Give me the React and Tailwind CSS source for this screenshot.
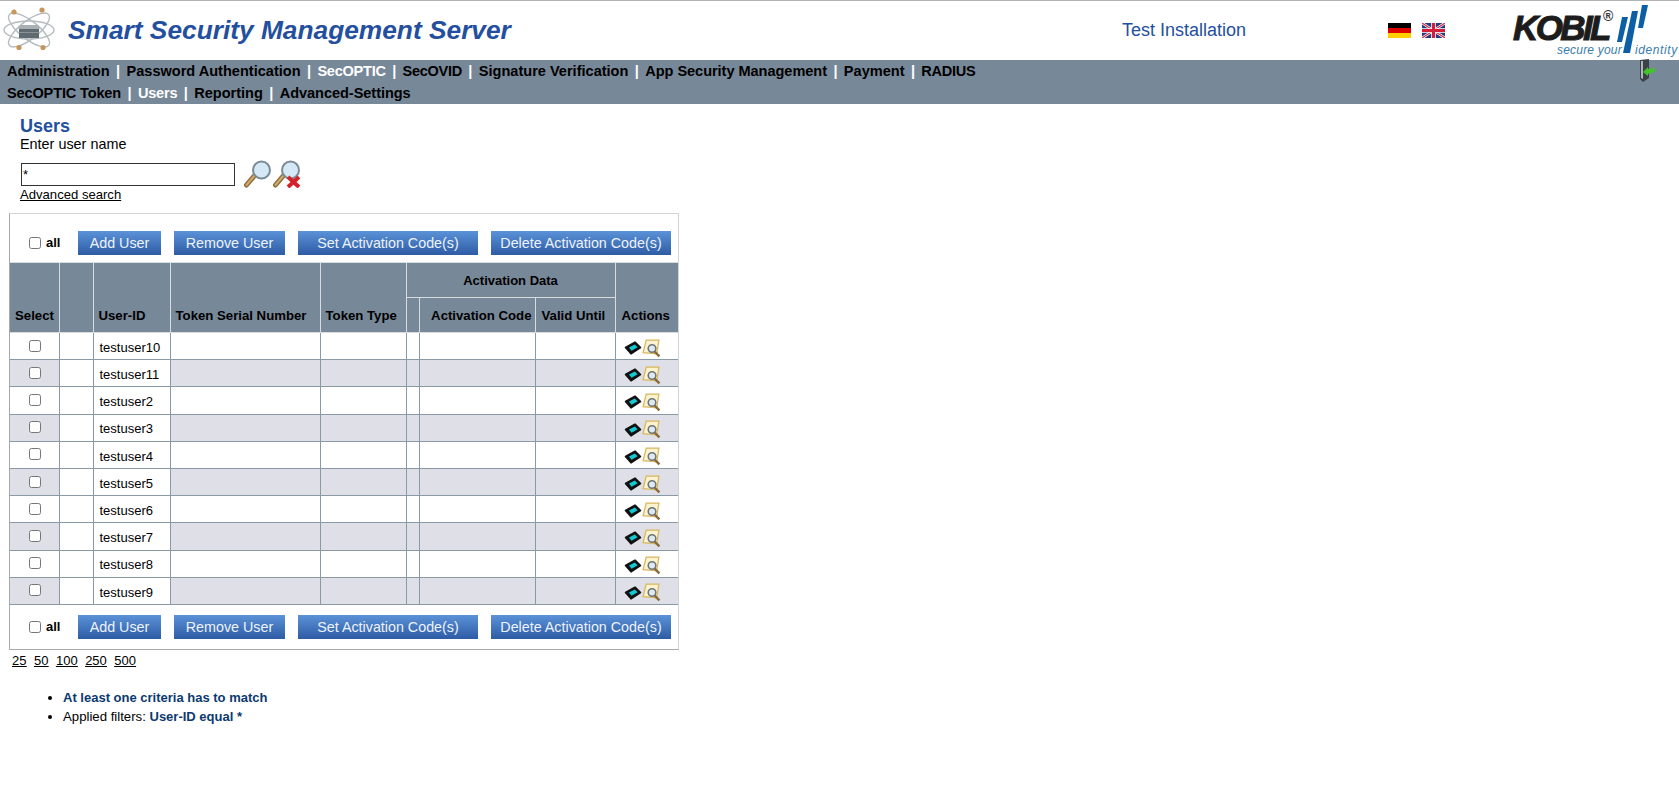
import React from "react";

const SANS = "font-['Liberation_Sans',Arial,sans-serif]";

const AtomLogo = () => (
  <svg width="54" height="50" viewBox="0 0 54 50" className="shrink-0">
    <g fill="none" stroke="#b4bcc0" strokeWidth="1.4">
      <ellipse cx="26" cy="24" rx="25" ry="9" />
      <ellipse cx="26" cy="24" rx="25" ry="9" transform="rotate(38 26 24)" />
      <ellipse cx="26" cy="24" rx="25" ry="9" transform="rotate(-38 26 24)" />
    </g>
    <path d="M17 19 L35 19 L37 23 L15 23 Z" fill="#a8b0b4" />
    <rect x="16" y="23" width="20" height="9" fill="#5f6b70" />
    <rect x="16" y="26" width="20" height="1" fill="#8a9498" />
    <circle cx="11" cy="6" r="2.6" fill="#c8955a" />
    <circle cx="39" cy="4" r="2.6" fill="#c8955a" />
    <circle cx="16" cy="41.5" r="2.6" fill="#c8955a" />
    <circle cx="40" cy="41.5" r="2.6" fill="#c8955a" />
  </svg>
);

const FlagDe = () => (
  <svg width="23" height="15" viewBox="0 0 23 15">
    <rect width="23" height="5" fill="#000" />
    <rect y="5" width="23" height="5" fill="#dd0000" />
    <rect y="10" width="23" height="5" fill="#ffce00" />
  </svg>
);

const FlagUk = () => (
  <svg width="23" height="15" viewBox="0 0 23 15">
    <rect width="23" height="15" fill="#27397f" />
    <path d="M0 0 L23 15 M23 0 L0 15" stroke="#fff" strokeWidth="2.6" />
    <path d="M0 0 L23 15 M23 0 L0 15" stroke="#d3304a" strokeWidth="1.2" />
    <path d="M11.5 0 V15 M0 7.5 H23" stroke="#fff" strokeWidth="4.6" />
    <path d="M11.5 0 V15 M0 7.5 H23" stroke="#d3203a" strokeWidth="3" />
  </svg>
);

const KobilLogo = () => (
  <div className="relative w-[166px] h-[55px] shrink-0">
    <span className={`absolute left-0 top-[10px] text-[35px] leading-[30px] font-bold italic text-[#1c1c1c] tracking-[-2.6px] [-webkit-text-stroke:1px_#1c1c1c] ${SANS}`}>
      KOBIL
    </span>
    <span className={`absolute left-[90px] top-[6px] text-[14px] leading-[14px] font-bold text-[#333] ${SANS}`}>®</span>
    <svg width="34" height="52" viewBox="0 0 34 52" className="absolute left-[104px] top-0">
      <path d="M5 14 L11 14 L5 39 L0 39 Z" fill="#0d5fa5" />
      <path d="M15 8 L21 8 L13 50 L6 50 Z" fill="#0d5fa5" />
      <path d="M25 2 L31 2 L26 25 L21 25 Z" fill="#0d5fa5" />
    </svg>
    <span className={`absolute left-[44px] top-[41px] text-[12px] leading-[13px] italic text-[#3a7ca8] tracking-[0.2px] ${SANS}`}>
      secure your
    </span>
    <span className={`absolute left-[122px] top-[41px] text-[12px] leading-[13px] italic text-[#3a7ca8] tracking-[0.6px] ${SANS}`}>
      identity
    </span>
  </div>
);

const DoorIcon = () => (
  <svg width="18" height="24" viewBox="0 0 18 24" className="absolute right-[23px] top-[-1px]">
    <path d="M2 1 L11 0 L11 19 L5 23 L2 20 Z" fill="#3c4146" />
    <path d="M3 2 L5 2 L5 20 L3 19 Z" fill="#aeb6bc" />
    <path d="M5 13 L10 8 L10 10 L17 9 L17 13 L10 15 L10 17 Z" fill="#41c42a" />
  </svg>
);

const SearchIcon = ({ clear }) => (
  <svg width="28" height="28" viewBox="0 0 28 28" className="shrink-0">
    <path d="M2.5 25 L11 15" stroke="#8a6a3a" strokeWidth="5" strokeLinecap="round" />
    <path d="M2.5 25 L11 15" stroke="#d0a868" strokeWidth="2.2" strokeLinecap="round" />
    <circle cx="17.5" cy="10" r="8.5" fill="#d5e8f5" stroke="#7b8b96" strokeWidth="2" />
    {clear && (
      <path d="M15 17 L26 27 M26 17 L15 27" stroke="#d3222a" strokeWidth="4" />
    )}
  </svg>
);

const TokenIcon = () => (
  <svg width="18" height="14" viewBox="0 0 18 14" className="shrink-0">
    <path d="M1.5 6.5 L11 1.2 L16.5 6.5 L7 12.8 Z" fill="#111" stroke="#111" strokeWidth="1.6" strokeLinejoin="round" />
    <path d="M5 6.6 L10.8 3.4 L13.6 6.2 L7.6 9.8 Z" fill="#14c8d4" />
  </svg>
);

const DetailIcon = () => (
  <svg width="19" height="19" viewBox="0 0 18 18" className="shrink-0">
    <path d="M4 1 L16 1 L14 14 L1 13 Z" fill="#fbf3cf" stroke="#d8b75e" strokeWidth="1.2" />
    <circle cx="9.5" cy="9" r="3.6" fill="#dfe9ef" stroke="#6b7478" strokeWidth="1.5" />
    <path d="M12 12 L16.5 16.5" stroke="#8a6a3a" strokeWidth="2.2" />
  </svg>
);

const NavItem = ({ label, active, last, className = "" }) => (
  <>
    <span className={`${active ? "text-white" : "text-black"} ${className}`}>{label}</span>
    {!last && <span className="text-white mx-[6.4px]">|</span>}
  </>
);

const ActionBar = ({ className }) => (
  <div className={`flex items-center h-[24px] ${className}`}>
    <input type="checkbox" className="ml-[19px] w-[12px] h-[12px] m-0" />
    <span className="ml-[5px] w-[32px] text-[13px] font-bold text-black">all</span>
    {[
      ["Add User", "w-[83px] mr-[13px]"],
      ["Remove User", "w-[111px] mr-[13px]"],
      ["Set Activation Code(s)", "w-[180px] mr-[13px]"],
      ["Delete Activation Code(s)", "w-[180px]"],
    ].map(([label, width]) => (
      <button
        key={label}
        className={`h-[24px] pt-px text-[14.3px] text-[#eef3fa] bg-gradient-to-b from-[#5b92d8] to-[#2e5ca5] ${width}`}
      >
        {label}
      </button>
    ))}
  </div>
);

const users = [
  "testuser10",
  "testuser11",
  "testuser2",
  "testuser3",
  "testuser4",
  "testuser5",
  "testuser6",
  "testuser7",
  "testuser8",
  "testuser9",
];

const th = "border border-[#d8dcdf] bg-[#778899] text-[13.2px] font-bold text-black";
const td = "border border-[#8a99a6] p-0";

export default function App() {
  return (
    <div className={`w-[1679px] h-[792px] bg-white overflow-hidden ${SANS}`}>
      <header className="h-[60px] border-t border-[#b3b3b3] flex items-center">
        <div className="ml-[3px] mr-[11px]">
          <AtomLogo />
        </div>
        <h1 className="w-[1054px] text-[26.3px] font-bold italic text-[#234f9e]">
          Smart Security Management Server
        </h1>
        <span className="w-[266px] text-[18px] text-[#234f9e]">Test Installation</span>
        <div className="flex gap-[11px] w-[125px]">
          <FlagDe />
          <FlagUk />
        </div>
        <KobilLogo />
      </header>

      <nav className="relative h-[44px] bg-[#778899] pl-[7px] text-[14.55px] leading-[22px] font-bold">
        <DoorIcon />
        <div>
          <NavItem label="Administration" />
          <NavItem label="Password Authentication" />
          <NavItem label="SecOPTIC" active className="tracking-[-0.25px]" />
          <NavItem label="SecOVID" className="tracking-[-0.3px]" />
          <NavItem label="Signature Verification" />
          <NavItem label="App Security Management" className="tracking-[-0.04px]" />
          <NavItem label="Payment" />
          <NavItem label="RADIUS" last className="tracking-[-0.3px]" />
        </div>
        <div>
          <NavItem label="SecOPTIC Token" className="tracking-[-0.15px]" />
          <NavItem label="Users" active className="tracking-[-0.2px]" />
          <NavItem label="Reporting" />
          <NavItem label="Advanced-Settings" last className="tracking-[-0.05px]" />
        </div>
      </nav>

      <main className="pt-[11px] pl-[9px] text-black">
        <div className="pl-[11px]">
          <h2 className="pt-px text-[18px] leading-[20px] font-bold text-[#234f9e]">Users</h2>
          <p className="text-[14.4px] leading-[16px]">Enter user name</p>
          <div className="flex items-center mt-[10px] h-[25px] gap-[9px]">
            <input
              defaultValue="*"
              className="ml-[1px] w-[214px] h-[23px] border border-[#333] px-[1px] text-[13px] leading-none outline-none"
            />
            <div className="flex gap-[1px] -mt-[2px]">
              <SearchIcon />
              <SearchIcon clear />
            </div>
          </div>
          <a className="block text-[13.1px] leading-[16px] underline text-black">Advanced search</a>
        </div>

        <div className="mt-[10px] w-[670px] border border-[#d4d4d4] border-b-[#a8a8a8] border-l-[#a8a8a8]">
          <ActionBar className="mt-[17px] mb-[7px]" />
          <table className="table-fixed w-[668px] border-r-0">
            <colgroup>
              <col className="w-[49px]" />
              <col className="w-[34px]" />
              <col className="w-[77px]" />
              <col className="w-[150px]" />
              <col className="w-[86px]" />
              <col className="w-[13px]" />
              <col className="w-[116px]" />
              <col className="w-[80px]" />
              <col className="w-[63px]" />
            </colgroup>
            <thead>
              <tr className="h-[35px]">
                <th rowSpan={2} className={`${th} align-bottom pb-[6px] text-left pl-[5px] border-l-0`}>Select</th>
                <th rowSpan={2} className={th}></th>
                <th rowSpan={2} className={`${th} align-bottom pb-[6px] text-left pl-[5px]`}>User-ID</th>
                <th rowSpan={2} className={`${th} align-bottom pb-[6px] text-left pl-[5px]`}>Token Serial Number</th>
                <th rowSpan={2} className={`${th} align-bottom pb-[6px] text-left pl-[5px]`}>Token Type</th>
                <th colSpan={3} className={`${th} text-[13px] pt-[2px]`}>Activation Data</th>
                <th rowSpan={2} className={`${th} align-bottom pb-[6px] pr-[2px] border-r-0`}>Actions</th>
              </tr>
              <tr className="h-[35px]">
                <th className={th}></th>
                <th className={`${th} align-bottom pb-[6px] text-right pr-[3px]`}>Activation Code</th>
                <th className={`${th} align-bottom pb-[6px] text-left pl-[6px]`}>Valid Until</th>
              </tr>
            </thead>
            <tbody>
              {users.map((user, i) => (
                <tr key={user} className={`h-[27.2px] ${i % 2 ? "bg-[#dfdfe7]" : "bg-white"}`}>
                  <td className={`${td} border-l-0 text-center`}>
                    <input type="checkbox" className="block ml-[19px] -mt-[1px] w-[12px] h-[12px]" />
                  </td>
                  <td className={`${td} bg-white`}></td>
                  <td className={`${td} pl-[6px] pt-[3px] text-[13px] bg-white`}>{user}</td>
                  <td className={td}></td>
                  <td className={td}></td>
                  <td className={td}></td>
                  <td className={td}></td>
                  <td className={td}></td>
                  <td className={`${td} border-r-0`}>
                    <div className="flex items-center pl-[8px] pt-[4px]">
                      <TokenIcon />
                      <DetailIcon />
                    </div>
                  </td>
                </tr>
              ))}
            </tbody>
          </table>
          <ActionBar className="mt-[10px] mb-[10px]" />
        </div>

        <div className="mt-[3px] ml-[3px] flex gap-[7.5px] text-[13px] leading-[16px] underline">
          <a>25</a>
          <a>50</a>
          <a>100</a>
          <a>250</a>
          <a>500</a>
        </div>

        <ul className="mt-[19px] ml-[54px] list-disc marker:text-black text-[13.2px] leading-[19px]">
          <li className="font-bold text-[13px] text-[#0b3a70]">At least one criteria has to match</li>
          <li>
            Applied filters: <span className="font-bold text-[13px] text-[#0b3a70]">User-ID equal *</span>
          </li>
        </ul>
      </main>
    </div>
  );
}
